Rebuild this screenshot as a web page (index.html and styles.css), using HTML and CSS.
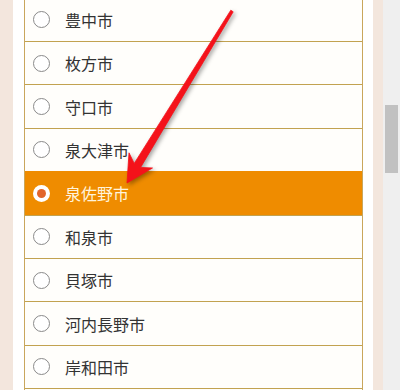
FILE: index.html
```html
<!DOCTYPE html>
<html lang="ja">
<head>
<meta charset="utf-8">
<title>市区町村選択</title>
<link rel="stylesheet" href="styles.css">
</head>
<body>
<div class="page">
  <div class="main">
    <div class="panel">
      <ul class="list">
        <li class="item"><span class="radio"></span><span class="label">豊中市</span></li>
        <li class="item"><span class="radio"></span><span class="label">枚方市</span></li>
        <li class="item"><span class="radio"></span><span class="label">守口市</span></li>
        <li class="item"><span class="radio"></span><span class="label">泉大津市</span></li>
        <li class="item selected"><span class="radio"></span><span class="label">泉佐野市</span></li>
        <li class="item"><span class="radio"></span><span class="label">和泉市</span></li>
        <li class="item"><span class="radio"></span><span class="label">貝塚市</span></li>
        <li class="item"><span class="radio"></span><span class="label">河内長野市</span></li>
        <li class="item"><span class="radio"></span><span class="label">岸和田市</span></li>
        <li class="item"></li>
      </ul>
    </div>
  </div>
  <div class="scrollbar"><div class="thumb"></div></div>
</div>
<svg class="arrow" width="400" height="390" viewBox="0 0 400 390">
  <polygon points="127,183 152.5,168 140.6,167.4 233.2,11.8 230.8,10.2 134.2,163.4 129,152.8" fill="#f4121a" stroke="#f4121a" stroke-width="0.8" stroke-linejoin="round"/>
</svg>
</body>
</html>
```

FILE: styles.css
```css
html, body {
  margin: 0;
  height: 390px;
  overflow: hidden;
}
body {
  font-family: "Noto Sans CJK JP", "Noto Sans", sans-serif;
  background: #efefef;
  position: relative;
}
.page {
  display: flex;
  height: 390px;
}
.main {
  width: 383px;
  flex: none;
  background: #f3e6dd;
  padding: 0 10px 0 13px;
  box-sizing: border-box;
}
.panel {
  background: #ffffff;
  height: 100%;
  padding: 0 10px 0 11px;
  overflow: hidden;
}
.list {
  margin: -2.4px 0 0;
  padding: 0;
  list-style: none;
  border-left: 1px solid #c9a65c;
  border-right: 1px solid #c9a65c;
}
.item {
  height: 43.4px;
  box-sizing: border-box;
  border-top: 1px solid #c2a250;
  display: flex;
  align-items: center;
  padding-left: 8px;
  background: #fffefb;
  color: #333333;
  font-size: 16px;
}
.radio {
  width: 17px;
  height: 17px;
  flex: none;
  border-radius: 50%;
  border: 1px solid #8a8a8a;
  box-sizing: border-box;
  background: #ffffff;
  margin-right: 15px;
}
.item.selected {
  background: #ef8c00;
  border-top-color: #ef8c00;
  color: #fff4dc;
}
.selected .radio {
  border: none;
  display: flex;
  align-items: center;
  justify-content: center;
}
.selected .radio::after {
  content: "";
  width: 9px;
  height: 9px;
  border-radius: 50%;
  background: #e2652b;
}
.scrollbar {
  width: 17px;
  flex: none;
  background: #efefef;
  padding-top: 105px;
  box-sizing: border-box;
}
.thumb {
  height: 68px;
  margin: 0 2px;
  background: #c1c1c1;
}
.arrow {
  position: absolute;
  left: 0;
  top: 0;
  pointer-events: none;
  filter: drop-shadow(2px 2px 2px rgba(0, 0, 0, 0.35));
}
```
